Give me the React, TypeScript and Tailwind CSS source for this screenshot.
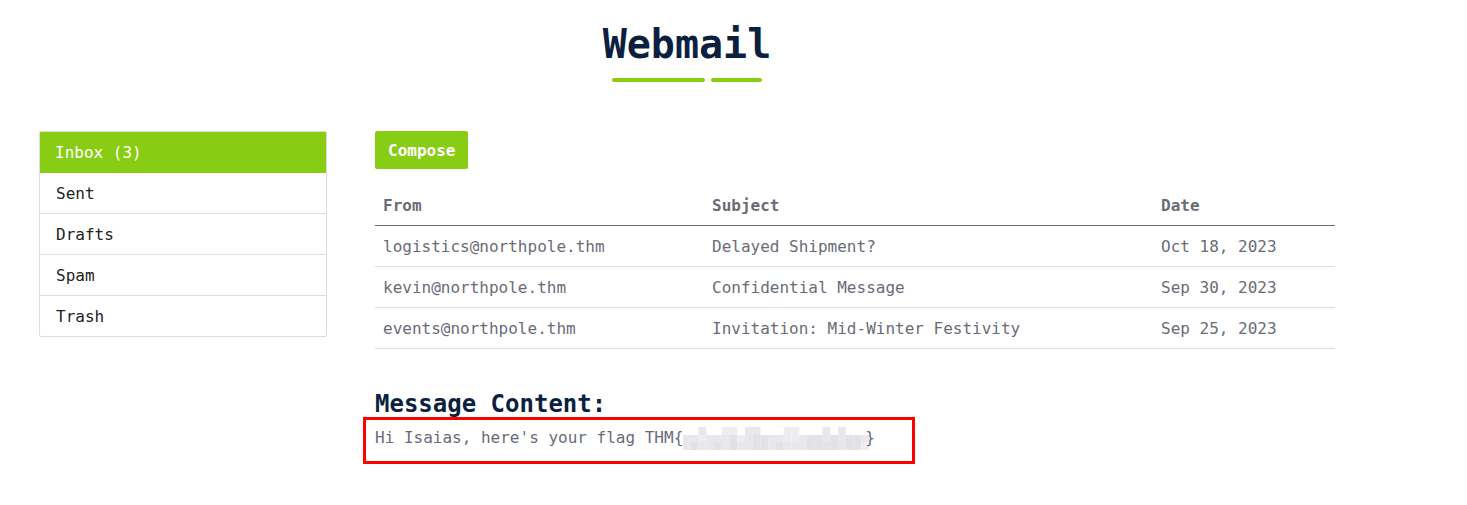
const folders = ["Sent", "Drafts", "Spam", "Trash"];

const emails = [
  { from: "logistics@northpole.thm", subject: "Delayed Shipment?", date: "Oct 18, 2023" },
  { from: "kevin@northpole.thm", subject: "Confidential Message", date: "Sep 30, 2023" },
  { from: "events@northpole.thm", subject: "Invitation: Mid-Winter Festivity", date: "Sep 25, 2023" },
];

// pixelated (redacted) flag, drawn as blocks
const topRow = [0, 0, 3, 0, 0, 2, 2, 0, 3, 3, 0, 0, 0, 2, 2, 0, 0, 0, 3, 0, 3, 0, 0, 0];
const midRow = [3, 3, 2, 3, 3, 3, 4, 2, 3, 4, 4, 3, 3, 2, 2, 3, 4, 4, 3, 4, 3, 4, 4, 3];
const lowRow = [3, 4, 3, 3, 4, 3, 4, 3, 3, 4, 4, 3, 4, 3, 3, 3, 4, 4, 4, 4, 3, 4, 4, 2];
const shades = ["#ffffff", "#f3f3f5", "#ededf0", "#e8e8eb", "#e2e2e5"];

function Redacted() {
  const w = 7.75;
  return (
    <svg width="188" height="24" className="inline-block align-top">
      {topRow.map((s, i) =>
        s ? <rect key={"t" + i} x={i * w} y={1} width={w} height={8} fill={shades[s]} /> : null
      )}
      {midRow.map((s, i) => (
        <rect key={"m" + i} x={i * w} y={9} width={w} height={7} fill={shades[s]} />
      ))}
      {lowRow.map((s, i) => (
        <rect key={"b" + i} x={i * w} y={16} width={w} height={8} fill={shades[s]} />
      ))}
    </svg>
  );
}

export default function App() {
  return (
    <div className="min-h-screen bg-white" style={{ fontFamily: '"DejaVu Sans Mono", "Liberation Mono", monospace' }}>
      <div className="w-[1296px] ml-[39px] pt-[20px]">
        <div className="flex flex-col items-center">
          <h1 className="text-[40px] leading-[48px] font-bold text-[#0c1f3f]">Webmail</h1>
          <div className="flex gap-[6px] mt-[10px]">
            <div className="w-[93px] h-[4px] rounded-full bg-[#88cc14]" />
            <div className="w-[51px] h-[4px] rounded-full bg-[#88cc14]" />
          </div>
        </div>

        <div className="flex gap-[48px] mt-[49px]">
          <div className="w-[288px] shrink-0">
            <div className="border border-[#dddddd] rounded-[2px] overflow-hidden">
              <div className="bg-[#88cc14] text-white text-[16px] leading-[24px] px-[16px] pt-[10px] pb-[8px] -mx-px -mt-px">
                Inbox (3)
              </div>
              {folders.map((f, i) => (
                <div
                  key={f}
                  className={`text-[#222222] text-[16px] leading-[24px] px-[16px] pt-[9px] pb-[7px] ${
                    i < folders.length - 1 ? "border-b border-[#dddddd]" : ""
                  }`}
                >
                  {f}
                </div>
              ))}
            </div>
          </div>

          <div className="w-[960px]">
            <button className="bg-[#88cc14] text-white font-bold text-[16px] leading-[24px] px-[13px] pt-[8px] pb-[6px] rounded-[2px]">
              Compose
            </button>

            <table className="w-full mt-[16px] text-[16px] leading-[24px] text-[#6b6b78] border-collapse">
              <thead>
                <tr className="border-b border-[#6b6b78]">
                  <th className="text-left font-bold px-[8px] pt-[9px] pb-[7px] w-[329px]">From</th>
                  <th className="text-left font-bold px-[8px] pt-[9px] pb-[7px] w-[449px]">Subject</th>
                  <th className="text-left font-bold px-[8px] pt-[9px] pb-[7px]">Date</th>
                </tr>
              </thead>
              <tbody>
                {emails.map((e) => (
                  <tr key={e.from} className="border-b border-[#dddddd]">
                    <td className="px-[8px] pt-[9px] pb-[7px]">{e.from}</td>
                    <td className="px-[8px] pt-[9px] pb-[7px]">{e.subject}</td>
                    <td className="px-[8px] pt-[9px] pb-[7px]">{e.date}</td>
                  </tr>
                ))}
              </tbody>
            </table>

            <h2 className="mt-[41px] text-[24px] leading-[29px] font-bold text-[#0c1f3f]">Message Content:</h2>
            <div className="relative mt-[7px] text-[16px] leading-[24px] text-[#6b6b78]">
              <span>Hi Isaias, here's your flag THM{"{"}</span>
              <Redacted />
              <span className="-ml-[6px]">{"}"}</span>
              <div className="absolute left-[-12px] top-[-9px] w-[552px] h-[47px] border-[3px] border-[#ff0000]" />
            </div>
          </div>
        </div>
      </div>
    </div>
  );
}
